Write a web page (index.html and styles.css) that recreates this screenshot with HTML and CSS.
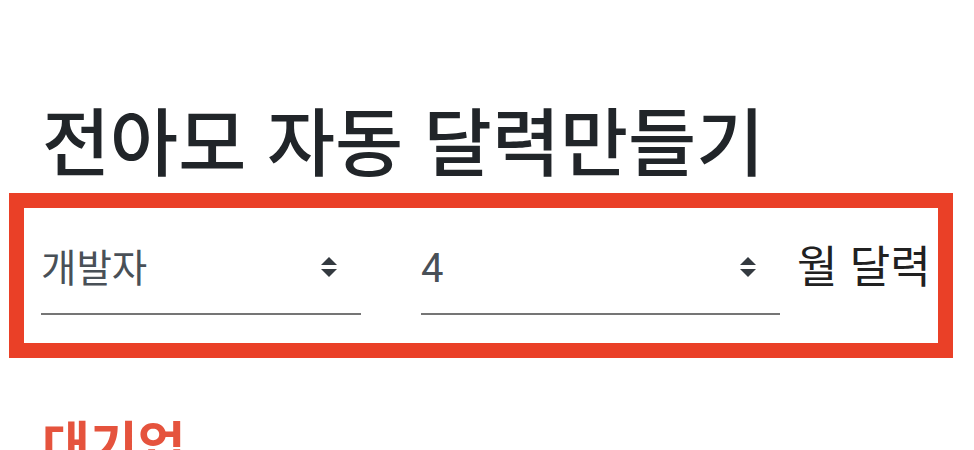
FILE: index.html
```html
<!DOCTYPE html>
<html lang="ko">
<head>
<meta charset="utf-8">
<link rel="stylesheet" href="styles.css">
</head>
<body>
<main class="page">
  <h1 class="title">전아모 자동 달력만들기</h1>
  <section class="picker">
    <div class="select select-company">
      <span class="select-value">개발자</span>
      <svg class="select-arrow" viewBox="0 0 4 5" width="16" height="20"><path d="M2 0L0 2h4zm0 5L0 3h4z" fill="#343a40"/></svg>
    </div>
    <div class="select select-month">
      <span class="select-value select-value-num">4</span>
      <svg class="select-arrow" viewBox="0 0 4 5" width="16" height="20"><path d="M2 0L0 2h4zm0 5L0 3h4z" fill="#343a40"/></svg>
    </div>
    <span class="picker-label">월 달력</span>
  </section>
  <h2 class="section-title">대기업</h2>
</main>
</body>
</html>
```

FILE: styles.css
```css
html, body {
  margin: 0;
  padding: 0;
  background: #ffffff;
}
body {
  font-family: "Noto Sans CJK KR", "Noto Sans", sans-serif;
  color: #212529;
  overflow: hidden;
  height: 450px;
}
.page {
  padding: 0 21px 0 9px;
}
.title {
  margin: 0;
  padding: 88px 0 0 33px;
  font-size: 74px;
  font-weight: 500;
  line-height: 100px;
  box-sizing: border-box;
  height: 193px;
  color: #212529;
  white-space: nowrap;
}
.picker {
  border: 15px solid #ea4027;
  height: 135px;
  display: flex;
  align-items: flex-start;
  padding: 0 9px 0 17px;
}
.select {
  flex: 0 0 auto;
  height: 107px;
  border-bottom: 2px solid #757575;
  box-sizing: border-box;
  display: flex;
  align-items: flex-end;
  justify-content: space-between;
  padding-bottom: 24px;
}
.select-company {
  width: 320px;
  margin-right: 60px;
}
.select-month {
  width: 359px;
}
.select-value {
  font-family: Roboto, "Noto Sans CJK KR", sans-serif;
  font-size: 38.5px;
  line-height: 40px;
  color: #495057;
}
.select-value-num {
  font-size: 40px;
}
.select-arrow {
  margin: 0 24px 12px 0;
}
.picker-label {
  flex: 0 0 auto;
  white-space: nowrap;
  margin-left: 17px;
  margin-top: 28px;
  font-size: 44px;
  line-height: 56px;
  color: #212121;
}
.section-title {
  margin: 0;
  padding: 50px 0 0 33px;
  font-size: 52px;
  font-weight: 700;
  line-height: 70px;
  color: #e5533d;
}
```
